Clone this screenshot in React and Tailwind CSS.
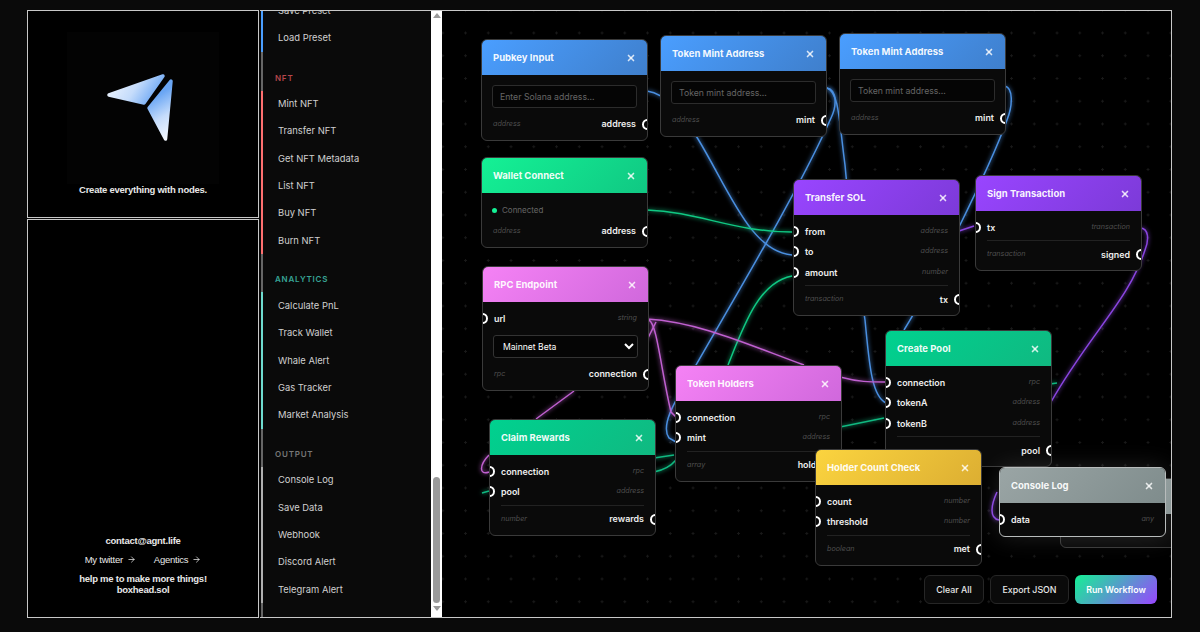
import React from "react";
import { X, ArrowRight } from "lucide-react";

const groups = [
  { items: ["Save Preset", "Load Preset"], rail: "border-[#4a9eff]", wrap: "pb-[1px]" },
  { title: "NFT", color: "text-[#b5474c]", rail: "border-[#ff7070]", items: ["Mint NFT", "Transfer NFT", "Get NFT Metadata", "List NFT", "Buy NFT", "Burn NFT"] },
  { title: "ANALYTICS", color: "text-[#37a596]", rail: "border-[#6fdcd0]", items: ["Calculate PnL", "Track Wallet", "Whale Alert", "Gas Tracker", "Market Analysis"] },
  { title: "OUTPUT", color: "text-[#777777]", rail: "border-[#b0b0b0]", items: ["Console Log", "Save Data", "Webhook", "Discord Alert", "Telegram Alert"] },
];

const blue = "bg-[linear-gradient(135deg,#4a9eff,#3f7fcc)]";
const green = "bg-[linear-gradient(135deg,#14f195,#10c883)]";
const emerald = "bg-[linear-gradient(135deg,#00d18f,#10b981)]";
const purple = "bg-[linear-gradient(135deg,#9945ff,#7c3ad8)]";
const pink = "bg-[linear-gradient(135deg,#f582f5,#d068dc)]";
const yellow = "bg-[linear-gradient(135deg,#fbd43f,#dcae32)]";
const gray = "bg-[linear-gradient(135deg,#9aa5a5,#7f8c8c)]";

// page order is z-order, later nodes sit on top
const nodes = [
  { title: "Pubkey Input", pos: "left-[38px] top-[28px]", head: blue, input: "Enter Solana address...", type: "address", out: "address" },
  { title: "Token Mint Address", pos: "left-[217px] top-[24px]", head: blue, input: "Token mint address...", type: "address", out: "mint" },
  { title: "Token Mint Address", pos: "left-[396px] top-[22px]", head: blue, input: "Token mint address...", type: "address", out: "mint" },
  { title: "Wallet Connect", pos: "left-[38px] top-[146px]", head: green, status: true, type: "address", out: "address" },
  { title: "Transfer SOL", pos: "left-[350px] top-[168px]", head: purple, inputs: [["from", "address"], ["to", "address"], ["amount", "number"]], type: "transaction", out: "tx", divider: true },
  { title: "Sign Transaction", pos: "left-[532px] top-[164px]", head: purple, inputs: [["tx", "transaction"]], type: "transaction", out: "signed", divider: true },
  { title: "RPC Endpoint", pos: "left-[39px] top-[255px]", head: pink, inputs: [["url", "string"]], select: true, type: "rpc", out: "connection" },
  { title: "Token Holders", pos: "left-[232px] top-[354px]", head: pink, inputs: [["connection", "rpc"], ["mint", "address"]], type: "array", out: "holders", divider: true },
  { title: "Create Pool", pos: "left-[442px] top-[319px]", head: emerald, inputs: [["connection", "rpc"], ["tokenA", "address"], ["tokenB", "address"]], type: "", out: "pool", divider: true },
  { title: "Claim Rewards", pos: "left-[46px] top-[408px]", head: emerald, inputs: [["connection", "rpc"], ["pool", "address"]], type: "number", out: "rewards", divider: true },
  { title: "Holder Count Check", pos: "left-[372px] top-[438px]", head: yellow, inputs: [["count", "number"], ["threshold", "number"]], type: "boolean", out: "met", divider: true },
  { title: "Console Log", pos: "left-[617px] top-[467px]", head: gray, inputs: [["data", ""]] },
  { title: "Console Log", pos: "left-[556px] top-[456px]", head: gray, inputs: [["data", "any"]], selected: true },
];

const wires = [
  { d: "M648 91 C668 94 684 114 699 139 C730 190 752 252 793 255", color: "#4a8fe0" },
  { d: "M828 88 C838 90 838 106 832 118 C800 190 740 290 697 365 C680 395 660 424 670 438 L677 442", color: "#4a8fe0" },
  { d: "M828 88 C840 92 840 120 846 165 C850 210 860 280 866 320 C870 360 872 396 887 403", color: "#4a8fe0" },
  { d: "M1006 86 C1014 88 1014 105 1008 120 C990 170 930 290 905 330", color: "#4a8fe0" },
  { d: "M648 210 C700 212 735 232 793 232", color: "#10c883" },
  { d: "M729 365 C745 325 760 282 793 276", color: "#10c883" },
  { d: "M655 458 L675 455", color: "#10b981" },
  { d: "M655 472 C665 470 672 466 677 460", color: "#10b981" },
  { d: "M841 427 L885 418", color: "#10b981" },
  { d: "M1051 384 L1058 383", color: "#10b981" },
  { d: "M483 493 L490 491", color: "#10b981" },
  { d: "M648 319 C700 322 750 345 805 365", color: "#c060d0" },
  { d: "M841 377 C860 382 870 382 886 382", color: "#c060d0" },
  { d: "M650 320 C658 324 662 370 672 412 L677 417", color: "#c060d0" },
  { d: "M657 322 L648 340", color: "#c060d0" },
  { d: "M575 391 L537 419", color: "#c060d0" },
  { d: "M490 455 C480 465 480 476 490 472", color: "#c060d0" },
  { d: "M960 231 L975 226", color: "#8a45e0" },
  { d: "M1141 228 C1150 228 1150 240 1146 250 C1130 300 1090 335 1052 402", color: "#8a45e0" },
  { d: "M998 492 C992 505 990 518 1000 520", color: "#8a45e0" },
];

function FlowNode({ node }) {
  return (
    <div
      className={`absolute ${node.pos} ml-[1px] w-[167px] overflow-hidden rounded-[6px] border bg-[#0a0a0a] ${
        node.selected ? "border-[#b8bcbc] shadow-[0_0_24px_rgba(255,255,255,0.12)]" : "border-[#3a3a3a]"
      }`}
    >
      <div className={`flex h-[35px] items-center justify-between pl-[11px] pr-[11px] pt-[1px] ${node.head}`}>
        <span className="text-[9.5px] font-bold text-white/95">{node.title}</span>
        <X size={10} strokeWidth={4} className="text-white/80" />
      </div>
      <div className="pb-[2px] pt-[6px]">
        {node.input && (
          <div className="mx-[10px] mt-[4px]">
            <input
              placeholder={node.input}
              className="block h-[23px] w-full rounded-[3px] border border-[#2c2c2c] bg-[#050505] px-[7px] text-[8.7px] text-white outline-none placeholder:text-[#666666]"
            />
          </div>
        )}
        {node.status && (
          <div className="-mb-[5px] mt-[1px] flex h-[20px] items-center gap-[5px] px-[10px] text-[8px] text-[#666666]">
            <span className="size-[5px] rounded-full bg-[#14f195]" />
            Connected
          </div>
        )}
        {node.inputs &&
          node.inputs.map(([label, type]) => (
            <div key={label} className="relative flex h-[20.5px] items-center justify-between px-[11px]">
              <span className="absolute left-[-6px] top-1/2 -mt-[5.5px] size-[11px] rounded-full border-2 border-white bg-[#0a0a0a]" />
              <span className="text-[8.9px] font-semibold text-[#eeeeee]">{label}</span>
              <span className="text-[7.2px] italic text-[#4f4f4f]">{type}</span>
            </div>
          ))}
        {node.select && (
          <div className="mx-[10px] mt-[6.5px]">
            <select className="block h-[23px] w-full rounded-[3px] border border-[#333333] bg-[#050505] px-[5px] text-[8.6px] text-white outline-none">
              <option>Mainnet Beta</option>
            </select>
          </div>
        )}
        {node.out && (
          <div
            className={`relative mx-[11px] flex h-[28px] items-center justify-between ${
              node.divider ? "mt-[2.5px] border-t border-[#222222]" : "mt-[2px]"
            }`}
          >
            <span className="text-[7.2px] italic text-[#4f4f4f]">{node.type}</span>
            <span className="text-[8.9px] font-semibold text-[#eeeeee]">{node.out}</span>
            <span className="absolute right-[-17px] top-1/2 -mt-[5.5px] size-[11px] rounded-full border-2 border-white bg-[#0a0a0a]" />
          </div>
        )}
        {!node.out && <div className="h-[4px]" />}
      </div>
    </div>
  );
}

function Logo() {
  return (
    <svg width="152" height="152" viewBox="67 32 152 152" className="bg-[#030303]">
      <defs>
        <linearGradient id="wingA" x1="107" y1="80" x2="150" y2="108" gradientUnits="userSpaceOnUse">
          <stop offset="0" stopColor="#f4f8ff" />
          <stop offset="0.55" stopColor="#c5dcfb" />
          <stop offset="1" stopColor="#6aa6f4" />
        </linearGradient>
        <linearGradient id="wingB" x1="172" y1="136" x2="150" y2="100" gradientUnits="userSpaceOnUse">
          <stop offset="0" stopColor="#f4f8ff" />
          <stop offset="0.5" stopColor="#c5dcfb" />
          <stop offset="1" stopColor="#6aa6f4" />
        </linearGradient>
      </defs>
      <path d="M109 95 L163 76 L144 103 Z" fill="url(#wingA)" stroke="url(#wingA)" strokeWidth="3.5" strokeLinejoin="round" />
      <path d="M171 81 L165.5 139 L149 108 Z" fill="url(#wingB)" stroke="url(#wingB)" strokeWidth="3.5" strokeLinejoin="round" />
    </svg>
  );
}

export default function App() {
  return (
    <div className="flex h-[632px] w-[1200px] overflow-hidden bg-[#0a0a0a] pb-[14px] pl-[27px] pt-[10px] font-['Inter',sans-serif]">
      {/* Left column */}
      <div className="flex w-[232px] flex-col gap-[1px] font-['Liberation_Sans',sans-serif] text-[9.5px] tracking-[-0.25px] text-[#e8e8e8]">
        <div className="flex h-[208px] flex-col items-center border border-[#c8c8c8] bg-black pt-[21px]">
          <Logo />
          <p className="-mt-[1px] font-bold">Create everything with nodes.</p>
        </div>
        <div className="flex flex-1 flex-col items-center justify-end border border-[#c8c8c8] bg-black pb-[22px] leading-[11px]">
          <p className="font-bold">contact@agnt.life</p>
          <div className="mt-[8px] flex gap-[18px]">
            <span className="flex items-center gap-[4px]">
              My twitter <ArrowRight size={9} />
            </span>
            <span className="flex items-center gap-[4px]">
              Agentics <ArrowRight size={9} />
            </span>
          </div>
          <p className="mt-[8px] font-bold">help me to make more things!</p>
          <p className="font-bold">boxhead.sol</p>
        </div>
      </div>

      {/* Node palette */}
      <div className="ml-[1px] flex w-[182px] border-y border-[#c8c8c8] bg-[#0a0a0a]">
        <div className="flex-1 overflow-hidden">
          <div className="-mt-[14px] ml-[1px] border-l-2 border-[#666666] pb-[30px]">
            {groups.map((group) => (
              <div key={group.items[0]} className={group.wrap}>
                {group.title && (
                  <div className={`flex h-[38px] items-end pb-[7px] pl-[12px] text-[8px] font-semibold tracking-[0.8px] ${group.color}`}>
                    {group.title}
                  </div>
                )}
                <div className={`-ml-[2px] border-l-2 ${group.rail}`}>
                  {group.items.map((item) => (
                    <div key={item} className="flex h-[27.3px] items-center pl-[15px] text-[9.4px] text-[#d0d0d0]">
                      {item}
                    </div>
                  ))}
                </div>
              </div>
            ))}
          </div>
        </div>
        {/* Scrollbar */}
        <div className="flex w-[11px] flex-col items-center bg-white">
          <span className="mt-[2px] size-0 border-x-[4px] border-b-[5px] border-x-transparent border-b-[#9a9a9a]" />
          <div className="mt-[459px] h-[126px] w-[7px] rounded-full bg-[#9a9a9a]" />
          <span className="mt-[3px] size-0 border-x-[4px] border-t-[5px] border-x-transparent border-t-[#9a9a9a]" />
        </div>
      </div>

      {/* Canvas */}
      <div className="relative w-[730px] overflow-hidden border-y border-r border-[#c8c8c8] bg-black bg-[radial-gradient(circle,#191919_1px,transparent_1px)] bg-[size:22.75px_22.75px] bg-[position:-10.6px_10.6px]">
        <svg className="absolute inset-0" width="729" height="605" viewBox="443 11 729 605" fill="none">
          {wires.map((wire) => (
            <path key={wire.d} d={wire.d} stroke={wire.color} strokeWidth="1.5" style={{ filter: `drop-shadow(0 0 2px ${wire.color})` }} />
          ))}
        </svg>
        {nodes.map((node) => (
          <FlowNode key={node.pos} node={node} />
        ))}
        <div className="absolute bottom-[13px] right-[14px] flex gap-[6px] text-[8.8px] font-medium text-[#e8e8e8]">
          <button className="h-[29px] w-[60px] rounded-[6px] border border-[#262626] bg-[#0a0a0a]">Clear All</button>
          <button className="h-[29px] w-[79px] rounded-[6px] border border-[#262626] bg-[#0a0a0a]">Export JSON</button>
          <button className="h-[29px] w-[82px] rounded-[6px] bg-[linear-gradient(135deg,#14f195,#9945ff)] font-semibold text-white">Run Workflow</button>
        </div>
      </div>
    </div>
  );
}
